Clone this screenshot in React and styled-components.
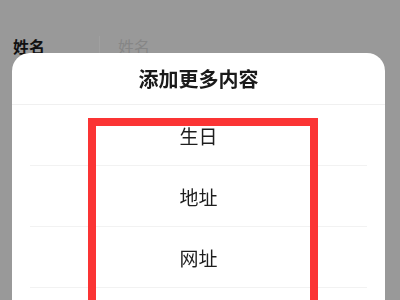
import React from 'react';
import styled, { createGlobalStyle } from 'styled-components';

const GlobalStyle = createGlobalStyle`
  html, body {
    margin: 0;
    padding: 0;
    background: #999999;
    font-family: "Noto Sans CJK SC", "Noto Sans", sans-serif;
  }
`;

const items = ['生日', '地址', '网址'];

export default function App() {
  return (
    <>
      <GlobalStyle />
      <Page>
        <FormRow>
          <Label>姓名</Label>
          <Divider />
          <Placeholder>姓名</Placeholder>
        </FormRow>
      </Page>

      <Sheet>
        <Header>添加更多内容</Header>
        <List>
          {items.map((item) => (
            <Row key={item}>{item}</Row>
          ))}
        </List>
        <Highlight />
      </Sheet>
    </>
  );
}

const Page = styled.div`
  height: 300px;
  padding-top: 36px;
  box-sizing: border-box;
`;

const FormRow = styled.div`
  display: flex;
  align-items: center;
  height: 20px;
  padding-left: 13px;
`;

const Label = styled.span`
  width: 86px;
  font-size: 16px;
  font-weight: 700;
  color: #111;
`;

const Divider = styled.span`
  width: 1px;
  height: 20px;
  background: #a0a0a0;
  margin-right: 18px;
`;

const Placeholder = styled.span`
  font-size: 16px;
  color: #868686;
`;

const Sheet = styled.div`
  position: fixed;
  left: 12px;
  right: 15px;
  top: 53px;
  bottom: -40px;
  background: #fff;
  border-radius: 18px 18px 0 0;
  overflow: hidden;
`;

const Header = styled.div`
  height: 51px;
  display: flex;
  align-items: center;
  justify-content: center;
  font-size: 20px;
  font-weight: 700;
  color: #1a1a1a;
  border-bottom: 1px solid #f0f0f0;
`;

const List = styled.div`
  padding: 0 18px;
`;

const Row = styled.div`
  height: 60px;
  display: flex;
  align-items: center;
  justify-content: center;
  font-size: 19px;
  color: #1e1e1e;
  border-bottom: 1px solid #f2f2f2;
`;

const Highlight = styled.div`
  position: absolute;
  left: 76px;
  top: 65px;
  width: 230px;
  height: 300px;
  box-sizing: border-box;
  border: 8px solid #fb3434;
  pointer-events: none;
`;
